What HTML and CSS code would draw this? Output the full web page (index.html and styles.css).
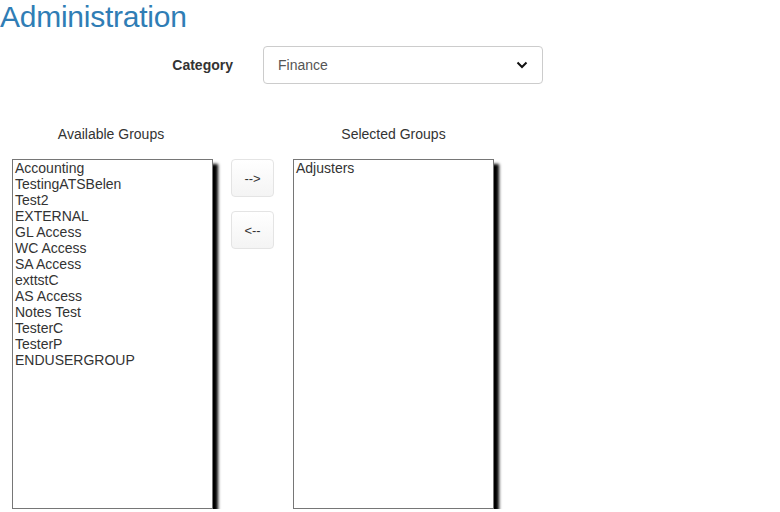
FILE: index.html
```html
<!DOCTYPE html>
<html>
<head>
<meta charset="utf-8">
<link rel="stylesheet" href="styles.css">
</head>
<body>
<h1 class="title">Administration</h1>
<div class="category-row">
  <label class="category-label">Category</label>
  <div class="select">
    <span class="select-value">Finance</span>
    <svg class="chevron" width="12" height="8" viewBox="0 0 12 8"><path d="M1.5 1.5 L6 6 L10.5 1.5" fill="none" stroke="#111" stroke-width="2"/></svg>
  </div>
</div>
<div class="groups">
  <div class="group-col">
    <div class="group-title title-left">Available Groups</div>
    <div class="listbox">
      <div class="opt">Accounting</div>
      <div class="opt">TestingATSBelen</div>
      <div class="opt">Test2</div>
      <div class="opt">EXTERNAL</div>
      <div class="opt">GL Access</div>
      <div class="opt">WC Access</div>
      <div class="opt">SA Access</div>
      <div class="opt">exttstC</div>
      <div class="opt">AS Access</div>
      <div class="opt">Notes Test</div>
      <div class="opt">TesterC</div>
      <div class="opt">TesterP</div>
      <div class="opt">ENDUSERGROUP</div>
    </div>
  </div>
  <div class="buttons">
    <button class="btn">--&gt;</button>
    <button class="btn">&lt;--</button>
  </div>
  <div class="group-col">
    <div class="group-title">Selected Groups</div>
    <div class="listbox">
      <div class="opt">Adjusters</div>
    </div>
  </div>
</div>
</body>
</html>
```
FILE: styles.css
```css
html, body {
  margin: 0;
  padding: 0;
  background: #fff;
  font-family: "Liberation Sans", Arial, sans-serif;
  color: #333;
  overflow: hidden;
}
.title {
  margin: 0;
  font-size: 30px;
  font-weight: normal;
  line-height: 34px;
  color: #2f7db5;
  letter-spacing: -0.25px;
}
.category-row {
  display: flex;
  align-items: center;
  margin-top: 12px;
  height: 38px;
}
.category-label {
  width: 233px;
  text-align: right;
  font-weight: bold;
  font-size: 14px;
  color: #333;
  padding-right: 30px;
}
.select {
  height: 36px;
  border: 1px solid #ccc;
  border-radius: 4px;
  display: flex;
  align-items: center;
  justify-content: space-between;
  padding: 0 14px 0 14px;
  box-sizing: content-box;
  width: 250px;
  font-size: 14px;
  color: #555;
}
.chevron { display: block; }
.groups {
  display: flex;
  align-items: flex-start;
  margin-top: 40px;
  padding-left: 12px;
}
.group-col {
  display: flex;
  flex-direction: column;
  align-items: center;
  width: 201px;
}
.group-title {
  font-size: 14px;
  line-height: 20px;
  color: #333;
  margin-bottom: 15px;
}
.title-left { margin-right: 3px; }
.listbox {
  border: 1px solid #767676;
  background: #fff;
  box-shadow: 5px 5px 3px #000;
  padding: 0 0 0 2px;
  box-sizing: border-box;
  width: 201px;
  height: 350px;
  font-size: 14px;
  line-height: 16px;
  color: #333;
}
.opt { white-space: nowrap; }
.buttons {
  display: flex;
  flex-direction: column;
  gap: 14px;
  margin-top: 35px;
  margin-left: 18px;
  margin-right: 19px;
}
.btn {
  width: 43px;
  height: 38px;
  border: 1px solid #e4e4e4;
  border-radius: 4px;
  background: linear-gradient(#ffffff, #f4f4f4);
  font-family: "Liberation Sans", Arial, sans-serif;
  font-size: 13px;
  color: #333;
  padding: 0;
}
```
